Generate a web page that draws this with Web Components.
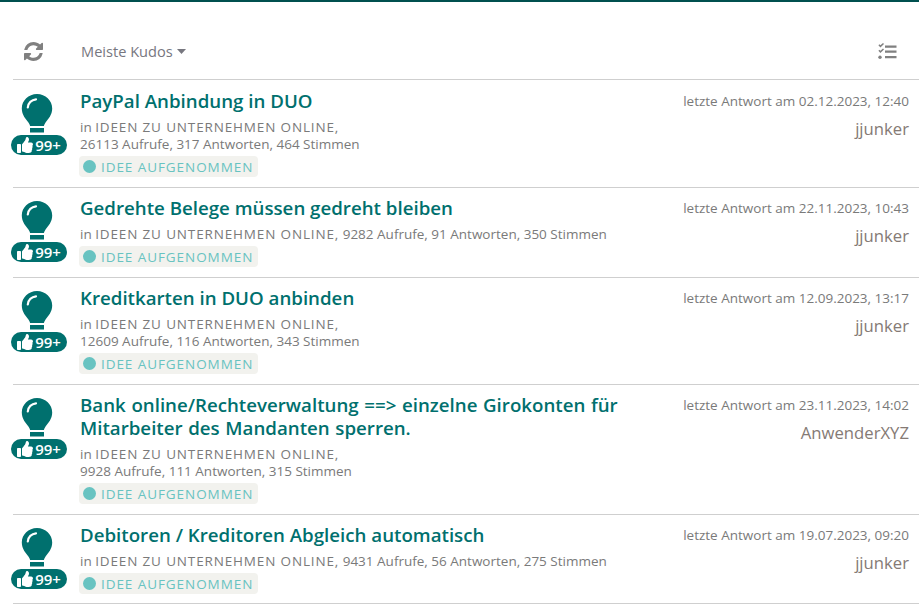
<!DOCTYPE html>
<html lang="de">
<head>
<meta charset="utf-8">
<title>Ideen</title>
<style>
  html, body { margin: 0; background: #fff; }
  body { font-family: "Open Sans", "Noto Sans", sans-serif; overflow: hidden; height: 608px; }
</style>
</head>
<body>
<idea-page>
  <idea-toolbar label="Meiste Kudos"></idea-toolbar>
  <idea-row h="108" first title="PayPal Anbindung in DUO" date="02.12.2023, 12:40" user="jjunker" stats="26113 Aufrufe, 317 Antworten, 464 Stimmen" wrap></idea-row>
  <idea-row h="90" title="Gedrehte Belege müssen gedreht bleiben" date="22.11.2023, 10:43" user="jjunker" stats="9282 Aufrufe, 91 Antworten, 350 Stimmen"></idea-row>
  <idea-row h="107" title="Kreditkarten in DUO anbinden" date="12.09.2023, 13:17" user="jjunker" stats="12609 Aufrufe, 116 Antworten, 343 Stimmen" wrap></idea-row>
  <idea-row h="130" title="Bank online/Rechteverwaltung ==> einzelne Girokonten für Mitarbeiter des Mandanten sperren." date="23.11.2023, 14:02" user="AnwenderXYZ" stats="9928 Aufrufe, 111 Antworten, 315 Stimmen" wrap></idea-row>
  <idea-row h="89" title="Debitoren / Kreditoren Abgleich automatisch" date="19.07.2023, 09:20" user="jjunker" stats="9431 Aufrufe, 56 Antworten, 275 Stimmen"></idea-row>
</idea-page>

<script>
class IdeaPage extends HTMLElement {
  constructor() {
    super();
    this.attachShadow({ mode: 'open' }).innerHTML = `
      <style>
        :host { display: block; border-top: 2px solid #00504f; padding-left: 13px; }
      </style>
      <slot></slot>
    `;
  }
}

class IdeaToolbar extends HTMLElement {
  connectedCallback() {
    const label = this.getAttribute('label') || '';
    this.attachShadow({ mode: 'open' }).innerHTML = `
      <style>
        :host { display: flex; align-items: center; height: 78px; box-sizing: border-box; padding: 21px 22px 0 11px;
          border-bottom: 1px solid #cfcfcf; color: #7c7c84; }
        .refresh { width: 19px; height: 19px; fill: #808080; display: block; }
        .sort { margin: -1px 0 0 38px; font-size: 14.600px; color: #77777f; display: flex; align-items: center; gap: 4px; }
        .caret { width: 9px; height: 5px; fill: #77777f; margin-top: 1px; }
        .tasks { margin-left: auto; width: 19px; height: 17px; fill: #808080; display: block; }
      </style>
      <svg class="refresh" viewBox="128 128 1536 1536"><path d="M1639 1056q0 5-1 7-64 268-268 434.5t-478 166.5q-146 0-282.5-55t-243.5-157l-129 129q-19 19-45 19t-45-19-19-45v-448q0-26 19-45t45-19h448q26 0 45 19t19 45-19 45l-137 137q71 66 161 102t187 36q134 0 250-65t186-179q11-17 53-117 8-23 30-23h192q13 0 22.5 9.5t9.5 22.5zm25-800v448q0 26-19 45t-45 19h-448q-26 0-45-19t-19-45 19-45l138-138q-148-137-349-137-134 0-250 65t-186 179q-11 17-53 117-8 23-30 23h-199q-13 0-22.5-9.5t-9.5-22.5v-7q65-268 270-434.5t480-166.5q146 0 284 55.5t245 156.5l130-129q19-19 45-19t45 19 19 45z"/></svg>
      <div class="sort">${label}<svg class="caret" viewBox="0 0 9 5"><path d="M0 0h9L4.5 5z"/></svg></div>
      <svg class="tasks" viewBox="0 0 19 17">
        <path d="M7 2.500h11.500v2.300H7zM7 7.500h11.500v2.300H7zM7 13h11.500v2.300H7z"/>
        <path d="M.4 2.300l1 -1 1 1L5 0l1 1L2.400 4.500zM.4 7.800l1-1 1 1L5 5.500l1 1L2.400 10z"/>
        <circle cx="2" cy="14.200" r="1.700"/>
      </svg>
    `;
  }
}

class IdeaKudos extends HTMLElement {
  constructor() {
    super();
    this.attachShadow({ mode: 'open' }).innerHTML = `
      <style>
        :host { display: flex; flex-direction: column; align-items: center; width: 56px; }
        .bulb { width: 32px; height: 40px; display: block; margin-right: 5px; }
        .pill { margin-top: 2px; box-sizing: border-box; width: 56px; height: 20px; border-radius: 10px; background: #00706e; color: #fff;
          display: flex; align-items: center; justify-content: center; gap: 2px; font-size: 15px; font-weight: 600; line-height: 20px; }
        .pill svg { width: 16px; height: 16px; fill: #fff; }
      </style>
      <svg class="bulb" viewBox="0 0 32 40">
        <path fill="#00706e" d="M16 1C7.500 1 .8 7.500.8 15.500c0 6.500 4 10.500 6.800 14.200.8 1.100 1.300 2.200 1.500 3.300h13.800c.2-1.100.7-2.200 1.500-3.300 2.800-3.700 6.800-7.700 6.800-14.200C31.200 7.500 24.500 1 16 1z"/>
        <rect x="9" y="35" width="14" height="4.500" fill="#00706e"/>
        <path d="M6.800 14.500C7.200 10 10.500 6.800 15 6.300" fill="none" stroke="#fff" stroke-width="2.200" stroke-linecap="round"/>
      </svg>
      <div class="pill">
        <svg viewBox="0 0 512 512"><path d="M104 224H24c-13.255 0-24 10.745-24 24v240c0 13.255 10.745 24 24 24h80c13.255 0 24-10.745 24-24V248c0-13.255-10.745-24-24-24zM384 81.452c0 42.416-25.97 66.208-33.277 94.548h101.723c33.397 0 59.397 27.746 59.553 58.098.084 17.938-7.546 37.249-19.439 49.197l-.11.11c9.836 23.337 8.237 56.037-9.308 79.469 8.681 25.895-.069 57.704-16.382 74.757 4.298 17.598 2.244 32.575-6.148 44.632C440.202 511.587 389.616 512 346.839 512l-2.845-.001c-48.287-.017-87.806-17.598-119.56-31.725-15.957-7.099-36.821-15.887-52.651-16.178-6.54-.12-11.783-5.457-11.783-11.998v-213.77c0-3.2 1.282-6.271 3.558-8.521 39.614-39.144 56.648-80.587 89.117-113.111 14.804-14.832 20.188-37.236 25.393-58.902C282.515 39.293 291.817 0 312 0c24 0 72 8 72 81.452z"/></svg>
        <span>99+</span>
      </div>
    `;
  }
}

class IdeaStatus extends HTMLElement {
  constructor() {
    super();
    this.attachShadow({ mode: 'open' }).innerHTML = `
      <style>
        :host { display: inline-flex; align-items: center; gap: 5px; height: 21px; padding: 0 5px 0 4px; border-radius: 4px;
          background: #f2f2ee; color: #68c3c1; font-size: 13.500px; letter-spacing: .93px; }
        i { width: 13px; height: 13px; border-radius: 50%; background: #68c3c1; }
      </style>
      <i></i><slot></slot>
    `;
  }
}

class IdeaRow extends HTMLElement {
  connectedCallback() {
    const rawTitle = this.getAttribute('title');
    const title = rawTitle.replace(/>/g, '&gt;');
    const date = this.getAttribute('date');
    const user = this.getAttribute('user');
    const stats = this.getAttribute('stats');
    const wrap = this.hasAttribute('wrap');
    const h = this.getAttribute('h');
    const top = this.hasAttribute('first') ? 10 : 9;
    this.removeAttribute('title');
    this.attachShadow({ mode: 'open' }).innerHTML = `
      <style>
        :host { display: flex; box-sizing: border-box; height: ${h}px; border-bottom: 1px solid #cfcfcf; padding: ${top}px 10px 0 0; }
        idea-kudos { margin: 3px 0 0 -2px; flex: none; }
        .main { margin-left: 13px; flex: 1; min-width: 0; max-width: 552px; }
        h3 { margin: -1px 0 0; font-size: 18.700px; line-height: 23px; font-weight: 600; color: #00706e; word-spacing: ${rawTitle.includes('==>') ? '.8px' : '0'}; }
        .meta { margin-top: 7px; font-size: 13.500px; line-height: 17px; color: #7a7a7a; }
        .forum { letter-spacing: .85px; }
        idea-status { margin: 3px 0 0 -1px; }
        .side { flex: none; width: 235px; margin-left: auto; text-align: right; color: #7a7a7a; }
        .date { font-size: 13.500px; line-height: 17px; margin-top: 3px; }
        .user { font-size: 16.700px; line-height: 22px; margin-top: 8px; color: #857a75; }
      </style>
      <idea-kudos></idea-kudos>
      <div class="main">
        <h3>${title}</h3>
        <div class="meta">in <span class="forum">IDEEN ZU UNTERNEHMEN ONLINE,</span>${wrap ? '<br>' : ' '}${stats}</div>
        <idea-status>IDEE AUFGENOMMEN</idea-status>
      </div>
      <div class="side">
        <div class="date">letzte Antwort am ${date}</div>
        <div class="user">${user}</div>
      </div>
    `;
  }
}

customElements.define('idea-page', IdeaPage);
customElements.define('idea-toolbar', IdeaToolbar);
customElements.define('idea-kudos', IdeaKudos);
customElements.define('idea-status', IdeaStatus);
customElements.define('idea-row', IdeaRow);
</script>
</body>
</html>
